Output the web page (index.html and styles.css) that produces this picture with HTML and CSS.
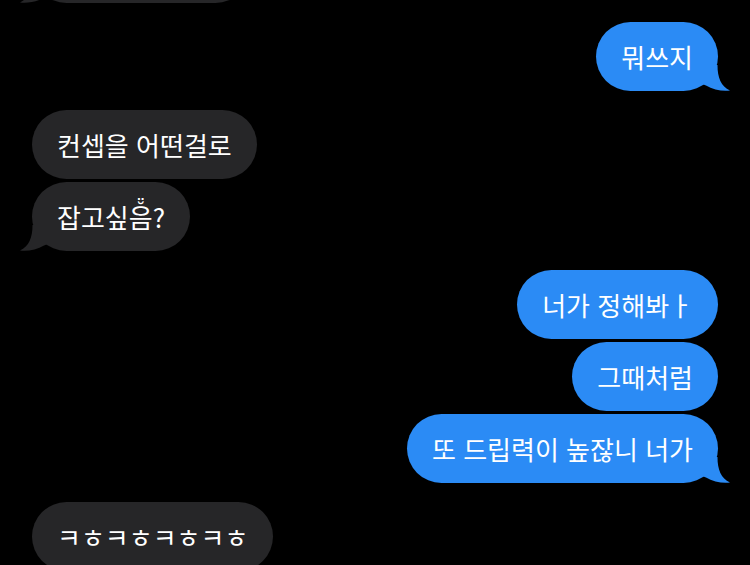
FILE: index.html
```html
<!DOCTYPE html>
<html lang="ko">

<head>
    <meta charset="UTF-8">
    <meta name="viewport" content="width=device-width, initial-scale=1.0">
    <title>Messages</title>
    <link rel="stylesheet" href="styles.css">
</head>

<body>
    <main class="chat">
        <!-- cut off at the top of the screen -->
        <div class="group in first">
            <div class="bubble blank">
                <svg class="tail" viewBox="0 0 28 26"><path d="M15.5,0 C15.5,13 19,21 28,25.5 C21,26.5 11,25 4,20.5 L0,19 L0,0 Z"/></svg>
            </div>
        </div>

        <div class="group out">
            <div class="bubble">뭐쓰지
                <svg class="tail" viewBox="0 0 28 26"><path d="M15.5,0 C15.5,13 19,21 28,25.5 C21,26.5 11,25 4,20.5 L0,19 L0,0 Z"/></svg>
            </div>
        </div>

        <div class="group in">
            <div class="bubble">컨셉을 어떤걸로</div>
            <div class="bubble">잡고싶<span class="marked">음<span class="marks"><span>¨</span><span>˘</span></span></span>?
                <svg class="tail" viewBox="0 0 28 26"><path d="M15.5,0 C15.5,13 19,21 28,25.5 C21,26.5 11,25 4,20.5 L0,19 L0,0 Z"/></svg>
            </div>
        </div>

        <div class="group out">
            <div class="bubble">너가 정해봐ㅏ</div>
            <div class="bubble">그때처럼</div>
            <div class="bubble">또 드립력이 높잖니 너가
                <svg class="tail" viewBox="0 0 28 26"><path d="M15.5,0 C15.5,13 19,21 28,25.5 C21,26.5 11,25 4,20.5 L0,19 L0,0 Z"/></svg>
            </div>
        </div>

        <div class="group in">
            <div class="bubble">ㅋㅎㅋㅎㅋㅎㅋㅎ</div>
        </div>
    </main>
</body>

</html>
```

FILE: styles.css
```css
body {
    margin: 0;
    padding: 0;
    background-color: #000000;
    font-family: 'Noto Sans CJK KR', 'Noto Sans', sans-serif;
    overflow: hidden;
}

.chat {
    display: flex;
    flex-direction: column;
    gap: 19px;
    padding: 0 32px;
}

.group {
    display: flex;
    flex-direction: column;
    gap: 3px;
}

.group.first {
    margin-top: -66px;
}

.group.in {
    align-items: flex-start;
}

.group.out {
    align-items: flex-end;
}

/* message bubbles */
.bubble {
    position: relative;
    height: 69px;
    line-height: 69px;
    padding: 0 25px;
    border-radius: 34.5px;
    font-size: 26px;
    color: #ffffff;
    white-space: nowrap;
}

.in .bubble {
    background-color: #262628;
}

.out .bubble {
    background-color: #2b8bf5;
}

.bubble.blank {
    width: 168px;
}

/* diaeresis + breve stacked over a hangul syllable */
.marked {
    position: relative;
}

.marks {
    position: absolute;
    left: 50%;
    top: 6px;
    transform: translateX(-50%);
    display: flex;
    flex-direction: column;
    align-items: center;
    font-family: 'DejaVu Sans', sans-serif;
    font-size: 19px;
    line-height: 4px;
}

.tail {
    position: absolute;
    bottom: 0;
    width: 28px;
    height: 26px;
}

.out .tail {
    right: -12px;
    fill: #2b8bf5;
}

.in .tail {
    left: -12px;
    fill: #262628;
    transform: scaleX(-1);
}
```
